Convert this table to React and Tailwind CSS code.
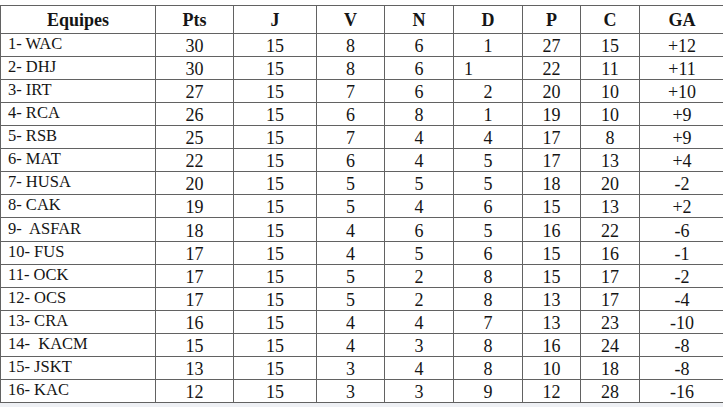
// App.jsx — classement
const rows = [
  ['1- WAC', 30, 15, 8, 6, 1, 27, 15, '+12'],
  ['2- DHJ', 30, 15, 8, 6, 1, 22, 11, '+11'],
  ['3- IRT', 27, 15, 7, 6, 2, 20, 10, '+10'],
  ['4- RCA', 26, 15, 6, 8, 1, 19, 10, '+9'],
  ['5- RSB', 25, 15, 7, 4, 4, 17, 8, '+9'],
  ['6- MAT', 22, 15, 6, 4, 5, 17, 13, '+4'],
  ['7- HUSA', 20, 15, 5, 5, 5, 18, 20, '-2'],
  ['8- CAK', 19, 15, 5, 4, 6, 15, 13, '+2'],
  ['9-  ASFAR', 18, 15, 4, 6, 5, 16, 22, '-6'],
  ['10- FUS', 17, 15, 4, 5, 6, 15, 16, '-1'],
  ['11- OCK', 17, 15, 5, 2, 8, 15, 17, '-2'],
  ['12- OCS', 17, 15, 5, 2, 8, 13, 17, '-4'],
  ['13- CRA', 16, 15, 4, 4, 7, 13, 23, '-10'],
  ['14-  KACM', 15, 15, 4, 3, 8, 16, 24, '-8'],
  ['15- JSKT', 13, 15, 3, 4, 8, 10, 18, '-8'],
  ['16- KAC', 12, 15, 3, 3, 9, 12, 28, '-16'],
];

const headers = ['Equipes', 'Pts', 'J', 'V', 'N', 'D', 'P', 'C', 'GA'];

export default function App() {
  return (
    <div
      className="w-[723px] h-[407px] overflow-hidden bg-[#eef0f4] text-[#151515]"
      style={{ fontFamily: '"Liberation Serif", "Times New Roman", serif' }}
    >
      <div className="h-[5px] bg-white" />
      <table className="border-collapse bg-white w-[724px] table-fixed">
        <colgroup>
          <col className="w-[155px]" />
          <col className="w-[78px]" />
          <col className="w-[83px]" />
          <col className="w-[68px]" />
          <col className="w-[69px]" />
          <col className="w-[69px]" />
          <col className="w-[58px]" />
          <col className="w-[59px]" />
          <col className="w-[85px]" />
        </colgroup>
        <thead>
          <tr className="h-[28px]">
            {headers.map((h) => (
              <th
                key={h}
                className="border border-[#626262] text-[18px] font-bold text-center p-0 leading-none"
              >
                {h}
              </th>
            ))}
          </tr>
        </thead>
        <tbody>
          {rows.map((r, i) => (
            <tr key={r[0]} className={i === 8 ? 'h-[24px]' : 'h-[23px]'}>
              <td className="border border-[#626262] text-[16.5px] pl-[7px] whitespace-pre leading-none p-0 pb-[1px]">
                {r[0]}
              </td>
              {r.slice(1).map((v, j) => (
                <td
                  key={j}
                  className={`border border-[#626262] text-[18px] leading-none p-0 pt-[2px] ${
                    i === 1 && j === 4 ? 'text-left pl-[10px]' : 'text-center'
                  }`}
                >
                  {v}
                </td>
              ))}
            </tr>
          ))}
        </tbody>
      </table>
    </div>
  );
}
